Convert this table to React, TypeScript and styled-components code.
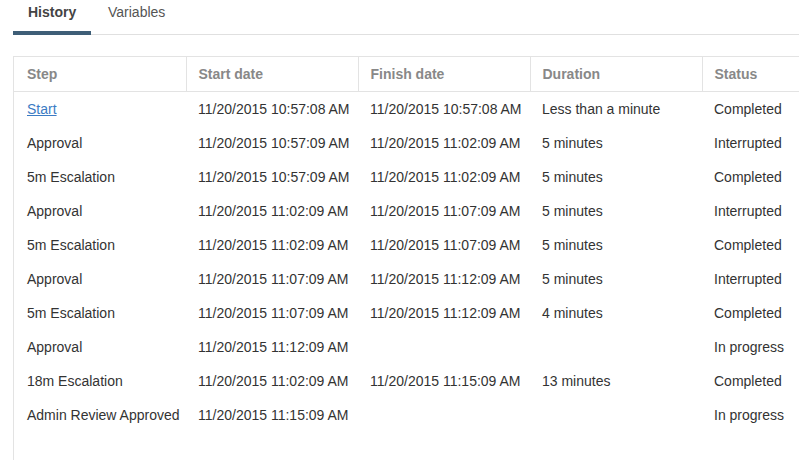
import React from "react";
import styled, { createGlobalStyle } from "styled-components";

const Global = createGlobalStyle`
  html, body { margin: 0; padding: 0; background: #fff; }
  body { font-family: "Liberation Sans", Arial, sans-serif; font-size: 14px; color: #333; }
`;

const Page = styled.div`
  padding-left: 13px;
  height: 460px;
  overflow: hidden;
  display: flex;
  flex-direction: column;
`;

const TabBar = styled.div`
  display: flex;
  border-bottom: 1px solid #e0e0e0;
  height: 35px;
  box-sizing: border-box;
`;

const Tab = styled.div<{ $active?: boolean }>`
  padding: 4px 16px 0 ${(p) => (p.$active ? "15px" : "17px")};
  height: 35px;
  box-sizing: border-box;
  font-size: 14px;
  font-weight: ${(p) => (p.$active ? "bold" : "normal")};
  color: ${(p) => (p.$active ? "#444" : "#555")};
  border-bottom: 4px solid ${(p) => (p.$active ? "#3e5e77" : "transparent")};
  margin-bottom: -1px;
  width: ${(p) => (p.$active ? "78px" : "auto")};
`;

const TableWrap = styled.div`
  margin-top: 21px;
  flex: 1;
  border-left: 1px solid #e3e3e3;
  border-top: 1px solid #e3e3e3;
  overflow: hidden;
`;

const Table = styled.table`
  border-collapse: collapse;
  table-layout: fixed;
  width: 860px;
`;

const Th = styled.th`
  text-align: left;
  font-weight: bold;
  color: #888;
  font-size: 14px;
  height: 34px;
  padding: 0 0 0 12px;
  border-bottom: 1px solid #e3e3e3;
  border-left: 1px solid #e3e3e3;
  &:first-child { border-left: none; padding-left: 13px; }
`;

const Td = styled.td`
  height: 34px;
  padding: 0 0 0 12px;
  color: #333;
  white-space: nowrap;
  &:first-child { padding-left: 13px; }
`;

const Link = styled.a`
  color: #3b7bc4;
  text-decoration: underline;
  cursor: pointer;
`;

const rows: [string, string, string, string, string][] = [
  ["Start", "11/20/2015 10:57:08 AM", "11/20/2015 10:57:08 AM", "Less than a minute", "Completed"],
  ["Approval", "11/20/2015 10:57:09 AM", "11/20/2015 11:02:09 AM", "5 minutes", "Interrupted"],
  ["5m Escalation", "11/20/2015 10:57:09 AM", "11/20/2015 11:02:09 AM", "5 minutes", "Completed"],
  ["Approval", "11/20/2015 11:02:09 AM", "11/20/2015 11:07:09 AM", "5 minutes", "Interrupted"],
  ["5m Escalation", "11/20/2015 11:02:09 AM", "11/20/2015 11:07:09 AM", "5 minutes", "Completed"],
  ["Approval", "11/20/2015 11:07:09 AM", "11/20/2015 11:12:09 AM", "5 minutes", "Interrupted"],
  ["5m Escalation", "11/20/2015 11:07:09 AM", "11/20/2015 11:12:09 AM", "4 minutes", "Completed"],
  ["Approval", "11/20/2015 11:12:09 AM", "", "", "In progress"],
  ["18m Escalation", "11/20/2015 11:02:09 AM", "11/20/2015 11:15:09 AM", "13 minutes", "Completed"],
  ["Admin Review Approved", "11/20/2015 11:15:09 AM", "", "", "In progress"],
];

export default function App() {
  return (
    <>
      <Global />
      <Page>
        <TabBar>
          <Tab $active>History</Tab>
          <Tab>Variables</Tab>
        </TabBar>
        <TableWrap>
          <Table>
            <colgroup>
              <col style={{ width: 172 }} />
              <col style={{ width: 172 }} />
              <col style={{ width: 172 }} />
              <col style={{ width: 172 }} />
              <col style={{ width: 172 }} />
            </colgroup>
            <thead>
              <tr>
                <Th>Step</Th>
                <Th>Start date</Th>
                <Th>Finish date</Th>
                <Th>Duration</Th>
                <Th>Status</Th>
              </tr>
            </thead>
            <tbody>
              {rows.map((r, i) => (
                <tr key={i}>
                  <Td>{i === 0 ? <Link>{r[0]}</Link> : r[0]}</Td>
                  <Td>{r[1]}</Td>
                  <Td>{r[2]}</Td>
                  <Td>{r[3]}</Td>
                  <Td>{r[4]}</Td>
                </tr>
              ))}
            </tbody>
          </Table>
        </TableWrap>
      </Page>
    </>
  );
}
